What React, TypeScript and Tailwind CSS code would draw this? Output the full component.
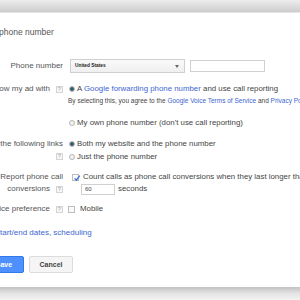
import React from "react";

function Help() {
  return (
    <span className="ml-[6px] inline-flex h-[7px] w-[7px] shrink-0 items-center justify-center border border-[#d4d4d4] bg-[#f6f6f6] text-[5px] leading-none text-[#999]">
      ?
    </span>
  );
}

function Radio({ on }: { on?: boolean }) {
  return (
    <span className="inline-flex h-[6px] w-[6px] shrink-0 items-center justify-center rounded-full border border-[#b5b5b5] bg-[#f3f3f3]">
      {on && <span className="h-[4px] w-[4px] rounded-full bg-[#2f5b6e]" />}
    </span>
  );
}

function Check({ on }: { on?: boolean }) {
  return (
    <span className="relative inline-flex h-[7px] w-[7px] shrink-0 items-center justify-center border border-[#bdbdbd] bg-[#fafafa]">
      {on && (
        <svg viewBox="0 0 10 10" className="absolute left-[0px] top-[-1px] h-[8px] w-[8px]">
          <path d="M2 5.5 L4.2 7.8 L8.5 2" fill="none" stroke="#3b6fd6" strokeWidth="1.6" />
        </svg>
      )}
    </span>
  );
}

export default function App() {
  const link = "text-[#3d66cf]";
  return (
    <div className="flex h-[300px] w-[300px] flex-col overflow-hidden bg-white font-['Liberation_Sans',Arial,sans-serif] text-[8px] leading-[12px] text-[#444]">
      <div className="h-[12px] shrink-0 bg-gradient-to-b from-[#ededed] to-[#cdcdcd]" />
      <div className="h-[1px] shrink-0 bg-[#e6e6e6]" />
      <div className="flex flex-1 flex-col whitespace-nowrap">
        {/* title */}
        <div className="ml-[-1px] mt-[13px] text-[8.5px] text-[#555]">phone number</div>

        {/* phone number row */}
        <div className="mt-[21px] flex h-[14px] items-center">
          <div className="flex w-[63px] shrink-0 justify-end text-[#555]">Phone number</div>
          <div className="ml-[7px] flex h-[14px] w-[115px] items-center justify-between border border-[#cfcfcf] bg-gradient-to-b from-[#fafafa] to-[#efefef] pl-[4px] pr-[5px]">
            <span className="text-[4.8px] font-semibold text-[#222]">United States</span>
            <span className="h-0 w-0 border-x-[2.5px] border-t-[3px] border-x-transparent border-t-[#666]" />
          </div>
          <div className="ml-[5px] h-[12px] w-[75px] border border-[#d0d0d0] bg-white" />
        </div>

        {/* show my ad with */}
        <div className="mt-[10px] flex">
          <div className="flex h-[12px] w-[63px] shrink-0 items-center justify-end text-[#555]">
            <span>Show my ad with</span>
            <Help />
          </div>
          <div className="ml-[6px] flex flex-col text-[7.85px]">
            <div className="flex h-[12px] items-center">
              <Radio on />
              <span className="ml-[2px]">
                A <span className={link}>Google forwarding phone number</span> and use call reporting
              </span>
            </div>
            <div className="ml-[-1px] text-[6.5px] text-[#444]">
              By selecting this, you agree to the <span className={link}>Google Voice Terms of Service</span> and{" "}
              <span className={link}>Privacy Policy</span>
            </div>
            <div className="mt-[10px] flex h-[12px] items-center">
              <Radio />
              <span className="ml-[2px]">My own phone number (don't use call reporting)</span>
            </div>
          </div>
        </div>

        {/* links */}
        <div className="mt-[9px] flex">
          <div className="flex w-[63px] shrink-0 flex-col items-end text-[#555]">
            <span className="h-[12px]">Show the following links</span>
            <span className="flex h-[12px] items-center">
              <Help />
            </span>
          </div>
          <div className="ml-[6px] flex flex-col text-[7.85px]">
            <div className="flex h-[12px] items-center">
              <Radio on />
              <span className="ml-[2px]">Both my website and the phone number</span>
            </div>
            <div className="mt-[1px] flex h-[12px] items-center">
              <Radio />
              <span className="ml-[2px]">Just the phone number</span>
            </div>
          </div>
        </div>

        {/* report conversions */}
        <div className="mt-[8px] flex">
          <div className="flex w-[63px] shrink-0 flex-col items-end text-[#555]">
            <span className="h-[12px]">Report phone call</span>
            <span className="flex h-[12px] items-center">
              conversions
              <Help />
            </span>
          </div>
          <div className="ml-[9px] flex flex-col text-[7.85px]">
            <div className="flex h-[12px] items-center">
              <Check on />
              <span className="ml-[4px]">Count calls as phone call conversions when they last longer than</span>
            </div>
            <div className="flex h-[12px] items-center">
              <div className="ml-[9px] flex h-[11px] w-[34px] items-center border border-[#d0d0d0] pl-[3px] text-[6px]">60</div>
              <span className="ml-[3px]">seconds</span>
            </div>
          </div>
        </div>

        {/* device */}
        <div className="mt-[8px] flex h-[12px] items-center">
          <div className="flex w-[63px] shrink-0 items-center justify-end text-[#555]">
            <span>Device preference</span>
            <Help />
          </div>
          <div className="ml-[5px] flex items-center text-[7.85px]">
            <Check />
            <span className="ml-[5px]">Mobile</span>
          </div>
        </div>

        {/* advanced */}
        <div className={`ml-[-4px] mt-[12px] ${link}`}>start/end dates, scheduling</div>

        {/* buttons */}
        <div className="mt-[17px] flex">
          <div className="ml-[-16px] flex h-[17px] w-[40px] items-center justify-center rounded-[2px] border border-[#3079ed] bg-[#4d90fe] text-[7px] font-bold text-white">
            Save
          </div>
          <div className="ml-[5px] flex h-[17px] w-[44px] items-center justify-center rounded-[2px] border border-[#dcdcdc] bg-[#f5f5f5] text-[7px] font-bold text-[#444]">
            Cancel
          </div>
        </div>
      </div>
      <div className="h-[13px] shrink-0 bg-gradient-to-b from-[#c2c2c2] via-[#e4e4e4] to-[#f3f3f3]" />
    </div>
  );
}
